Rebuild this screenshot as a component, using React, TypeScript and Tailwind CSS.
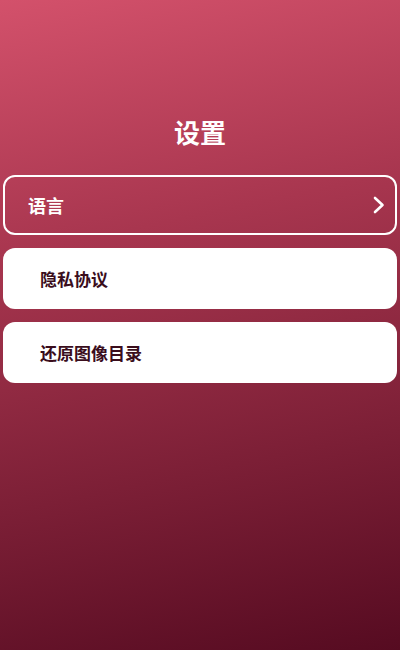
const font = { fontFamily: '"Noto Sans CJK SC", "Noto Sans", sans-serif' }

export default function App() {
  return (
    <div
      className="w-[400px] h-[650px] bg-[linear-gradient(168deg,#d3516b_0%,#a8364f_35%,#7c1f36_70%,#560b21_100%)] flex flex-col px-[3px]"
      style={font}
    >
      <h1 className="mt-[114px] text-center text-[26px] font-bold text-white leading-[36px]">设置</h1>

      <div className="mt-[25px] flex flex-col gap-[13px]">
        {/* language row */}
        <div className="h-[60px] rounded-[12px] border-2 border-white flex items-center justify-between pl-[23px] pr-[10px]">
          <span className="text-[18px] font-semibold text-white">语言</span>
          <svg width="12" height="18" viewBox="0 0 12 18" fill="none">
            <polyline
              points="2,2 9.5,9 2,16"
              stroke="white"
              strokeWidth="2.6"
              strokeLinecap="round"
              strokeLinejoin="round"
            />
          </svg>
        </div>

        <div className="h-[61px] rounded-[12px] bg-white flex items-center pl-[37px]">
          <span className="text-[17px] font-semibold text-[#3a0d1c]">隐私协议</span>
        </div>

        <div className="h-[61px] rounded-[12px] bg-white flex items-center pl-[37px]">
          <span className="text-[17px] font-semibold text-[#3a0d1c]">还原图像目录</span>
        </div>
      </div>
    </div>
  )
}
